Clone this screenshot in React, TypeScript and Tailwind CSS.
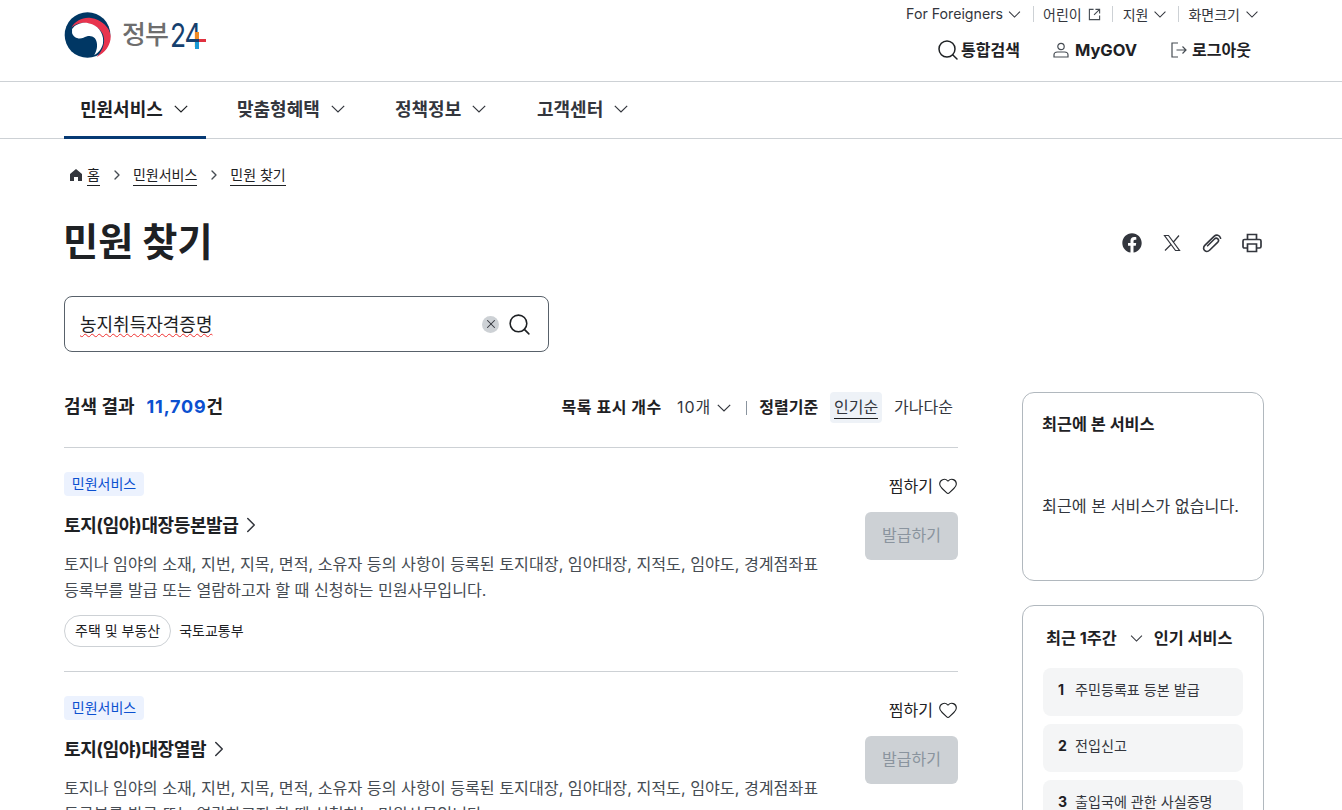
import { ChevronRight, Heart, Search, X } from "lucide-react";
import { FaFacebook } from "react-icons/fa";

const FONT = "font-['Inter','Noto_Sans_CJK_KR',sans-serif]";

const NAV_ITEMS = ["민원서비스", "맞춤형혜택", "정책정보", "고객센터"];

const POPULAR = ["주민등록표 등본 발급", "전입신고", "출입국에 관한 사실증명"];

const DESCRIPTION =
  "토지나 임야의 소재, 지번, 지목, 면적, 소유자 등의 사항이 등록된 토지대장, 임야대장, 지적도, 임야도, 경계점좌표 등록부를 발급 또는 열람하고자 할 때 신청하는 민원사무입니다.";

function Caret({ className }: { className: string }) {
  return (
    <svg className={className} viewBox="0 0 14 8" fill="none" stroke="currentColor" strokeWidth="1.2">
      <path d="M0.8 0.8L7 7L13.2 0.8" />
    </svg>
  );
}

function Logo() {
  return (
    <div className="flex items-center">
      <svg width="47" height="46" viewBox="0 0 140 136">
        <circle cx="70" cy="68" r="68" fill="#003764" />
        <path d="M22 46 C34 24 58 14 80 17 C112 21 138 46 139 72 C140 98 122 122 97 134 C118 112 126 84 114 62 C102 42 74 30 52 32 C40 33 30 38 22 46 Z" fill="#e8344e" />
        <path d="M24 50 C36 32 62 26 84 36 C108 46 120 70 116 94 C112 110 102 122 90 128 C100 112 102 92 92 78 C82 68 70 70 58 76 C44 82 28 76 24 62 Z" fill="#ffffff" />
      </svg>
      <span className="ml-[11px] text-[26px] leading-none tracking-[-1px] text-[#6e6e6e] font-medium">정부</span>
      <span className="relative ml-[2px] block h-[34px] w-[28px]">
        <span className="block origin-left scale-x-[0.8] text-[33px] leading-[34px] tracking-[-1.5px] text-[#15406e]">24</span>
        <span className="absolute left-[20px] top-[21px] h-[3px] w-[9px] bg-[#15406e]" />
        <span className="absolute left-[29px] top-[21px] h-[3px] w-[7px] bg-[#e0313f]" />
        <span className="absolute left-[25px] top-[14px] h-[7px] w-[4px] bg-[#f08a24]" />
        <span className="absolute left-[25px] top-[24px] h-[7px] w-[4px] bg-[#1a9ad6]" />
      </span>
    </div>
  );
}

function Header() {
  return (
    <header className="h-[82px] border-b border-[#cdd1d5]">
      <div className="ml-[64px] flex w-[1200px] justify-between">
        <div className="pt-[12px]">
          <Logo />
        </div>
        <div className="flex flex-col items-end">
          <div className="flex h-[26px] items-center pr-[5px] pt-[2px] text-[14px] text-[#33363d]">
            <span className="text-[14.2px]">For Foreigners</span>
            <Caret className="ml-[5px] h-[7px] w-[13px]" />
            <span className="ml-[12px] mr-[9px] h-[16px] w-px bg-[#cdd1d5]" />
            <span>어린이</span>
            <svg className="ml-[6px] size-[13px]" viewBox="0 0 14 14" fill="none" stroke="#464c53" strokeWidth="1.2">
              <path d="M6 1.5H1.5V12.5H12.5V8M8 1.5H12.5V6M12.5 1.5L6.5 7.5" />
            </svg>
            <span className="ml-[11px] mr-[10px] h-[16px] w-px bg-[#cdd1d5]" />
            <span>지원</span>
            <Caret className="ml-[5px] h-[7px] w-[14px]" />
            <span className="ml-[11px] mr-[9px] h-[16px] w-px bg-[#cdd1d5]" />
            <span>화면크기</span>
            <Caret className="ml-[5px] h-[7px] w-[14px]" />
          </div>
          <div className="mt-[12px] flex items-center pr-[13px] text-[16px] font-bold text-[#1e2124]">
            <Search className="size-[24px]" strokeWidth={1.5} />
            <span className="ml-[1px]">통합검색</span>
            <svg className="ml-[32px] size-[18px]" viewBox="0 0 18 18" fill="none" stroke="#464c53" strokeWidth="1.2">
              <circle cx="9" cy="5.5" r="3.2" />
              <path d="M2 16V14C2 12 3.5 11 5.5 11H12.5C14.5 11 16 12 16 14V16Z" />
            </svg>
            <span className="ml-[5px] text-[16.5px]">MyGOV</span>
            <svg className="ml-[33px] size-[18px]" viewBox="0 0 18 18" fill="none" stroke="#464c53" strokeWidth="1.2">
              <path d="M8 2H2V16H8M6.5 9H16M12.5 5.5L16 9L12.5 12.5" />
            </svg>
            <span className="ml-[4px]">로그아웃</span>
          </div>
        </div>
      </div>
    </header>
  );
}

function Nav() {
  return (
    <nav className="h-[57px] border-b border-[#cdd1d5]">
      <ul className="ml-[64px] flex h-full w-[1200px]">
        {NAV_ITEMS.map((item, i) => (
          <li
            key={item}
            className={
              "flex h-[57px] items-center border-b-[3px] text-[18px] font-bold " +
              (i === 0
                ? "w-[142px] border-[#063a74] pl-[16px] text-[#1e2124]"
                : "border-transparent text-[#33363d] " + (i === 1 ? "ml-[31px] w-[158px]" : i === 2 ? "w-[142px]" : ""))
            }
          >
            {item}
            <Caret className="ml-[11px] h-[8px] w-[14px]" />
          </li>
        ))}
      </ul>
    </nav>
  );
}

function Breadcrumb() {
  return (
    <div className="flex h-[24px] items-center pl-[5px] text-[14px] text-[#1e2124]">
      <svg className="size-[14px]" viewBox="0 0 14 14" fill="#33363d">
        <path d="M7 1L13 6V13H9V9H5V13H1V6Z" />
      </svg>
      <span className="ml-[4px] border-b border-[#1e2124] leading-[20px]">홈</span>
      <ChevronRight className="ml-[9px] mr-[8px] size-[16px] text-[#464c53]" strokeWidth={2} />
      <span className="border-b border-[#1e2124] leading-[20px]">민원서비스</span>
      <ChevronRight className="ml-[9px] mr-[8px] size-[16px] text-[#464c53]" strokeWidth={2} />
      <span className="border-b border-[#1e2124] leading-[20px]">민원 찾기</span>
    </div>
  );
}

function ShareIcons() {
  return (
    <div className="flex items-center gap-[20px] pr-[2px] text-[#33363d]">
      <FaFacebook className="size-[20px]" />
      <svg className="size-[20px]" viewBox="0 0 20 20" fill="none" stroke="#33363d" strokeWidth="1.2">
        <path d="M2.5 2.5H6.5L17.5 17.5H13.5ZM17 2.5L11 9.5M9 11.5L3 17.5" />
      </svg>
      <svg className="size-[20px]" viewBox="0 0 20 20" fill="none" stroke="#33363d" strokeWidth="1.6" strokeLinecap="round">
        <path d="M18.6 5.2C17.6 2 14.4 1.2 12 3.4L2.8 12.4C1 14.4 1.4 16.6 2.8 17.6C4.2 18.8 6.2 18.6 7.8 17L15.6 9.4C16.8 8.2 16.6 6.7 15.8 5.9C15 5.1 13.4 5 12.2 6.2L5.6 12.8" />
      </svg>
      <svg className="size-[20px]" viewBox="0 0 20 20" fill="none" stroke="#33363d" strokeWidth="1.7">
        <path d="M5.5 6.5V1.5H14.5V6.5" />
        <path d="M5 15H2.5C1.6 15 1 14.4 1 13.5V8C1 7 1.6 6.5 2.5 6.5H17.5C18.4 6.5 19 7 19 8V13.5C19 14.4 18.4 15 17.5 15H15" />
        <path d="M5.5 11H14.5V18.5H5.5Z" />
      </svg>
    </div>
  );
}

function SearchBox() {
  return (
    <div className="flex h-[56px] w-[485px] items-center rounded-[8px] border border-[#58616a] pl-[15px] pr-[16px]">
      <span className="flex-1 text-[18px] text-[#1e2124] underline decoration-wavy decoration-[#f03030] decoration-1 underline-offset-2">
        농지취득자격증명
      </span>
      <span className="flex size-[17px] items-center justify-center rounded-full bg-[#cdd1d5]">
        <X className="size-[14px] text-[#33363d]" strokeWidth={1.8} />
      </span>
      <Search className="ml-[8px] size-[25px] text-[#1e2124]" strokeWidth={1.5} />
    </div>
  );
}

function ResultBar() {
  return (
    <div className="flex h-[56px] items-start justify-between border-b border-[#cdd1d5]">
      <div className="pt-[1px] text-[18px] font-bold leading-[28px] text-[#1e2124]">
        검색 결과
        <span className="ml-[12px] tracking-[0.8px] text-[#0b50d0]">11,709</span>건
      </div>
      <div className="flex h-[31px] items-center pr-[5px] text-[16px] text-[#33363d]">
        <span className="pb-[2px] font-bold tracking-[0.55px] text-[#1e2124]">목록 표시 개수</span>
        <span className="ml-[15px] pb-[2px] tracking-[1px]">10개</span>
        <Caret className="ml-[6px] h-[8px] w-[14px]" />
        <span className="ml-[15px] mr-[12px] h-[14px] w-px bg-[#8a949e]" />
        <span className="pb-[2px] font-bold text-[#1e2124]">정렬기준</span>
        <span className="ml-[12px] flex h-[31px] w-[52px] items-center justify-center rounded-[4px] bg-[#eef2f7]">
          <span className="border-b border-[#1e2124] leading-[22px]">인기순</span>
        </span>
        <span className="ml-[12px] pb-[2px]">가나다순</span>
      </div>
    </div>
  );
}

function ResultItem({ title, last }: { title: string; last?: boolean }) {
  return (
    <article className={"flex h-[224px] justify-between pt-[24px] " + (last ? "" : "border-b border-[#cdd1d5]")}>
      <div className="w-[760px]">
        <span className="flex h-[24px] w-[80px] items-center justify-center rounded-[4px] bg-[#ecf2fe] pb-[2px] text-[14px] text-[#0b50d0]">
          민원서비스
        </span>
        <h3 className="mt-[14px] flex h-[30px] items-center text-[18px] font-bold tracking-[-0.4px] text-[#1e2124]">
          {title}
          <ChevronRight className="size-[26px] text-[#33363d]" strokeWidth={1.4} />
        </h3>
        <p className="mt-[11px] text-[16.15px] leading-[26px] text-[#464c53]">{DESCRIPTION}</p>
        <div className="mt-[12px] flex items-center text-[14px] text-[#1e2124]">
          <span className="flex h-[32px] items-center rounded-full border border-[#cdd1d5] px-[10px] pb-[2px]">주택 및 부동산</span>
          <span className="ml-[8px] pb-[2px]">국토교통부</span>
        </div>
      </div>
      <div className="flex w-[93px] flex-col items-end">
        <div className="flex h-[28px] items-center text-[16px] text-[#1e2124]">
          찜하기
          <Heart className="ml-[5px] size-[20px]" strokeWidth={1.3} />
        </div>
        <button
          type="button"
          className="mt-[12px] h-[48px] w-[93px] rounded-[6px] bg-[#cdd1d5] pb-[2px] text-[16px] text-[#8a949e]"
        >
          발급하기
        </button>
      </div>
    </article>
  );
}

function Sidebar() {
  return (
    <aside className="w-[242px] shrink-0">
      <div className="h-[189px] rounded-[12px] border border-[#b1b8be] px-[19px] pt-[19px]">
        <h4 className="text-[16.3px] font-bold leading-[24px] text-[#1e2124]">최근에 본 서비스</h4>
        <p className="mt-[58px] text-[16.2px] leading-[24px] text-[#33363d]">최근에 본 서비스가 없습니다.</p>
      </div>
      <div className="mt-[24px] h-[400px] rounded-[12px] border border-[#b1b8be] px-[20px] pt-[19px]">
        <div className="flex h-[26px] items-center whitespace-nowrap pl-[3px] text-[16.3px] font-bold text-[#1e2124]">
          최근 1주간
          <Caret className="ml-[13px] h-[7px] w-[13px] text-[#33363d]" />
          <span className="ml-[11px]">인기 서비스</span>
        </div>
        <ol className="mt-[17px] flex flex-col gap-[8px]">
          {POPULAR.map((name, i) => (
            <li key={name} className="flex h-[48px] items-center rounded-[8px] bg-[#f4f5f6] pb-[4px] pl-[15px] text-[14.1px] text-[#33363d]">
              <b className="w-[17px] text-[#1e2124]">{i + 1}</b>
              {name}
            </li>
          ))}
        </ol>
      </div>
    </aside>
  );
}

export default function App() {
  return (
    <div className={"h-[810px] w-[1342px] overflow-hidden bg-white " + FONT}>
      <Header />
      <Nav />
      <main className="ml-[64px] w-[1200px]">
        <div className="pt-[24px]">
          <Breadcrumb />
        </div>
        <div className="mt-[26px] flex h-[60px] items-center justify-between">
          <h1 className="ml-[-1px] text-[38.2px] font-bold text-[#1e2124]">민원 찾기</h1>
          <ShareIcons />
        </div>
        <div className="mt-[23px]">
          <SearchBox />
        </div>
        <div className="mt-[40px] flex justify-between">
          <section className="w-[894px]">
            <ResultBar />
            <ResultItem title="토지(임야)대장등본발급" />
            <ResultItem title="토지(임야)대장열람" last />
          </section>
          <Sidebar />
        </div>
      </main>
    </div>
  );
}
